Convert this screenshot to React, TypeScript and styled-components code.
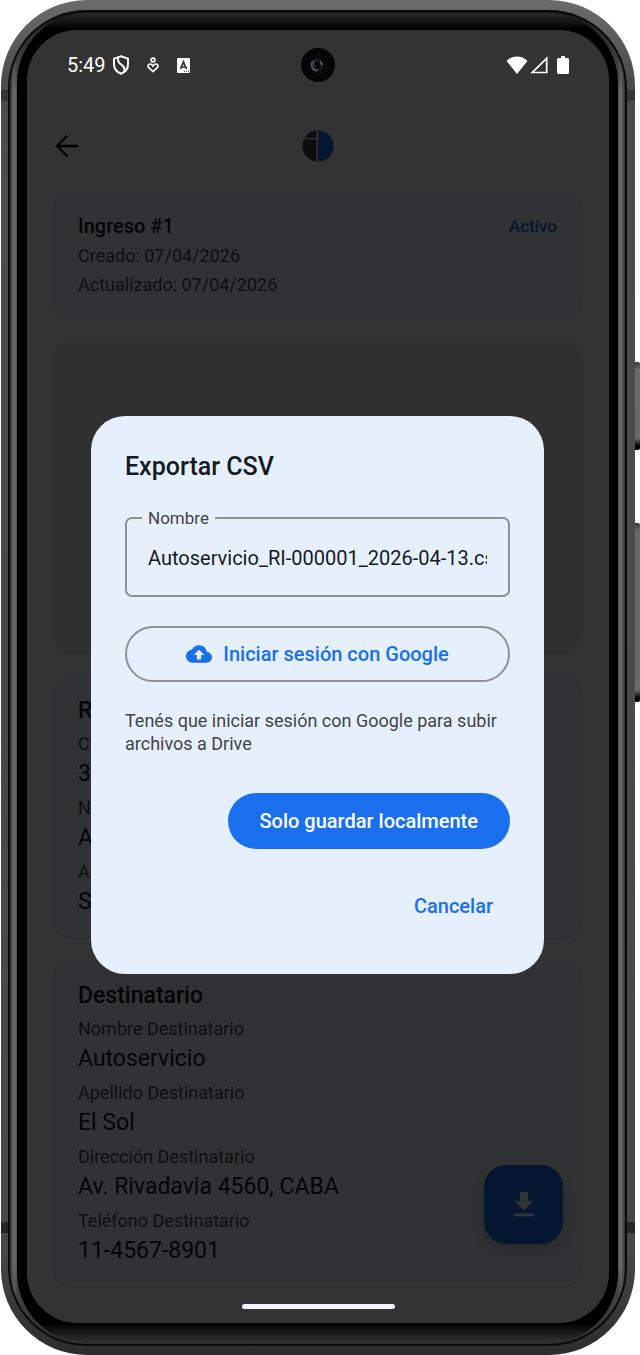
import React from "react";
import styled, { createGlobalStyle } from "styled-components";

const GlobalStyle = createGlobalStyle`
  *, *::before, *::after { box-sizing: border-box; }
  body { margin: 0; background: #fff; font-family: Roboto, sans-serif; }
  h1, h2, p, dl, dt, dd { margin: 0; }
  button { font: inherit; cursor: pointer; }
  svg { display: block; flex: none; }
`;

const Stage = styled.div`
  position: relative;
  padding: 0 5px 0 1px;
`;

const SideButton = styled.span<{ $top: number; $length: number }>`
  position: absolute;
  right: 0;
  top: ${(p) => p.$top}px;
  width: 6px;
  height: ${(p) => p.$length}px;
  border-radius: 0 2px 2px 0;
  background: linear-gradient(#3a3a3a, #6a6a6a 8px, #6a6a6a calc(100% - 12px), #000 calc(100% - 4px));
`;

const Frame = styled.div`
  position: relative;
  padding: 10px 8px 9px 7px;
  border-radius: 86px;
  background:
    linear-gradient(
      transparent 90px, #363636 90px, #363636 101px,
      transparent 101px, transparent calc(100% - 133px),
      #262626 calc(100% - 133px), #262626 calc(100% - 122px),
      transparent calc(100% - 122px)
    ),
    linear-gradient(#6c6c6c, #4c4c4c 6%, #484848 92%, #2c2c2c);
`;

const Groove = styled.div`
  padding: 2px;
  border-radius: 78px;
  background: #0a0a0a;
`;

const Rim = styled.div`
  padding: 1px 7px;
  border-radius: 76px;
  background:
    linear-gradient(#141414, #2c2c2c 20px, transparent 80px, transparent calc(100% - 80px), #333 calc(100% - 16px), #2c2c2c),
    linear-gradient(90deg, #303030, #707070 4px, #505050 7px, #505050 calc(100% - 7px), #707070 calc(100% - 4px), #303030);
`;

const Bezel = styled.div`
  padding: 17px 9px 20px 10px;
  border-radius: 70px;
  background: linear-gradient(#2b2b2b, #000 16px, #000 calc(100% - 20px), #333);
`;

const Screen = styled.div`
  position: relative;
  display: flex;
  flex-direction: column;
  overflow: hidden;
  border-radius: 50px;
  background: #333;
`;

const StatusBar = styled.div`
  display: flex;
  align-items: center;
  justify-content: space-between;
  height: 70px;
  padding: 0 40px;
  color: #fff;
`;

const StatusGroup = styled.div<{ $gap: number }>`
  display: flex;
  align-items: center;
  gap: ${(p) => p.$gap}px;
`;

const Clock = styled.time`
  margin-right: -11px;
  font-size: 20px;
  line-height: 24px;
`;

const Camera = styled.span`
  position: absolute;
  top: 18px;
  left: 50%;
  transform: translateX(-50%);
`;

const AppBar = styled.header`
  display: grid;
  grid-template-columns: 1fr auto 1fr;
  align-items: center;
  height: 91px;
  padding: 0 28px;
`;

const IconButton = styled.button`
  justify-self: start;
  padding: 0;
  border: 0;
  background: none;
  color: #000;
`;

const Content = styled.main`
  display: flex;
  flex-direction: column;
  gap: 23px;
  padding: 0 28px 0 27px;
`;

const Card = styled.section`
  padding: 20px 24px 18px;
  border-radius: 17px;
  background: #313234;
  box-shadow: 0 1px 2px rgba(0, 0, 0, 0.16);
`;

const Preview = styled.section`
  height: 312px;
  border-radius: 17px;
  background: #303030;
  box-shadow: 0 1px 2px rgba(0, 0, 0, 0.1);
`;

const CardHead = styled.div`
  display: flex;
  align-items: center;
  justify-content: space-between;
`;

const CardTitle = styled.h2<{ $large?: boolean }>`
  color: #040404;
  font-size: ${(p) => (p.$large ? 23 : 20)}px;
  font-weight: 500;
  line-height: ${(p) => (p.$large ? 32 : 30)}px;
`;

const Badge = styled.span`
  color: #051630;
  font-size: 17px;
  font-weight: 500;
`;

const Meta = styled.p`
  color: #0e0e0e;
  font-size: 18px;
  line-height: 29px;
`;

const Fields = styled.dl`
  display: grid;
  gap: 3px;
  padding-top: 3px;
`;

const FieldLabel = styled.dt`
  color: #0e0e0e;
  font-size: 18px;
  line-height: 27px;
`;

const FieldValue = styled.dd`
  color: #040404;
  font-size: 23px;
  line-height: 34px;
`;

const Fab = styled.button`
  position: absolute;
  right: 46px;
  bottom: 79px;
  display: grid;
  place-items: center;
  width: 79px;
  height: 79px;
  padding: 0;
  border: 0;
  border-radius: 22px;
  background: #051630;
  color: #333;
  box-shadow: 0 6px 14px rgba(0, 0, 0, 0.2);
`;

const NavBar = styled.div`
  display: flex;
  justify-content: center;
  height: 37px;
  padding-top: 18px;
`;

const NavHandle = styled.span`
  width: 153px;
  height: 5px;
  border-radius: 3px;
  background: #f1f4fd;
`;

const DialogLayer = styled.div`
  position: absolute;
  inset: 0;
  display: flex;
  align-items: center;
  padding: 36px 65px 0 64px;
`;

const Dialog = styled.div`
  display: flex;
  flex-direction: column;
  width: 100%;
  padding: 34px;
  border-radius: 34px;
  background: #e6f0fd;
`;

const DialogTitle = styled.h1`
  color: #171a1e;
  font-size: 25px;
  font-weight: 500;
  line-height: 34px;
`;

const Outline = styled.fieldset`
  min-width: 0;
  margin: 24px 0 29px;
  padding: 0 15px 7px;
  border: 2px solid #8e9091;
  border-radius: 7px;
`;

const Legend = styled.legend`
  padding: 0 6px;
  color: #444;
  font-size: 17px;
  line-height: 20px;
`;

const TextInput = styled.input`
  display: block;
  width: calc(100% - 12px);
  height: 60px;
  margin: 0 6px;
  padding: 0;
  border: 0;
  outline: 0;
  background: none;
  color: #171a1e;
  font-family: inherit;
  font-size: 20px;
`;

const PillButton = styled.button<{ $kind: "outlined" | "filled" | "text" }>`
  display: flex;
  align-items: center;
  justify-content: center;
  gap: 11px;
  align-self: ${(p) => (p.$kind === "outlined" ? "stretch" : "flex-end")};
  height: 56px;
  padding: 0 ${(p) => (p.$kind === "text" ? 17 : 32)}px;
  border: ${(p) => (p.$kind === "outlined" ? "2px solid #8e9091" : "0")};
  border-radius: 28px;
  background: ${(p) => (p.$kind === "filled" ? "#1a6fef" : "none")};
  color: ${(p) => (p.$kind === "filled" ? "#fff" : "#1a6fef")};
  font-size: 20px;
  font-weight: 500;
`;

const Note = styled.p`
  padding: 27px 0 38px;
  color: #444;
  font-size: 18px;
  line-height: 23px;
`;

const Actions = styled.div`
  display: flex;
  flex-direction: column;
  gap: 29px;
  padding-bottom: 6px;
`;

const ShieldIcon = () => (
  <svg width="16" height="20" viewBox="0 0 16 20" fill="none" stroke="currentColor" strokeWidth="2">
    <path d="M8 1.200 15 3.600v5.600c0 4.400-2.800 7.800-7 9.500-4.200-1.700-7-5.100-7-9.500V3.600z" />
    <path d="M5 2.600c-.3 3 .3 5 3 6.800c3 2 4 4 3.400 7" />
  </svg>
);

const HeartPersonIcon = () => (
  <svg width="12" height="16" viewBox="0 0 12 16" fill="none" stroke="currentColor" strokeWidth="1.700">
    <circle cx="6" cy="3" r="1.900" />
    <path d="M6 14.600 1.800 10.700C.3 9 1.300 7 3 7c1.500 0 2.300.8 3 2 .7-1.200 1.500-2 3-2 1.700 0 2.700 2 1.200 3.700z" />
  </svg>
);

const LetterIcon = () => (
  <svg width="13" height="15" viewBox="0 0 13 15">
    <rect width="13" height="15" rx="1" fill="currentColor" />
    <path d="M3.500 11 6.500 4l3 7M4.500 9h4" fill="none" stroke="#333" strokeWidth="1.700" />
    <path d="M7 13.300h5" stroke="#333" strokeDasharray="1 1" />
  </svg>
);

const WifiIcon = () => (
  <svg width="22" height="18" viewBox="0 0 22 18">
    <path d="M11 18 0.500 5C6-.9 16-.9 21.500 5z" fill="currentColor" />
  </svg>
);

const SignalIcon = () => (
  <svg width="25" height="18" viewBox="0 0 25 18" fill="none" stroke="currentColor" strokeWidth="1.700">
    <path d="M16.700 2.300v14.200H2.300z" />
  </svg>
);

const BatteryIcon = () => (
  <svg width="12" height="18" viewBox="0 0 12 18">
    <path d="M4 0h4v2h2.500Q12 2 12 3.500v13q0 1.500-1.500 1.500h-9Q0 18 0 16.500v-13Q0 2 1.500 2H4z" fill="currentColor" />
  </svg>
);

const CameraLens = () => (
  <svg width="34" height="34" viewBox="0 0 34 34">
    <circle cx="17" cy="17" r="17" fill="#050505" />
    <circle cx="17" cy="17" r="10" fill="#080808" stroke="#101011" />
    <circle cx="16" cy="17" r="6.500" fill="#1b1c1f" />
    <path d="M11.500 13.500a6 6 0 0 0 5 9.300" fill="none" stroke="#5a5b5e" strokeWidth="1.400" />
    <path d="M13.500 12.500a5 5 0 0 0-.5 6" fill="none" stroke="#2d4668" strokeWidth="1.600" />
    <circle cx="17" cy="17" r="3.400" fill="#08080a" />
    <path d="M19.500 13.500a5 5 0 0 1 1 4" fill="none" stroke="#77787c" strokeWidth="1.400" />
  </svg>
);

const BackIcon = () => (
  <svg width="24" height="24" viewBox="0 0 24 24" fill="none" stroke="currentColor" strokeWidth="2.400">
    <path d="M12.500 1.500 2 12l10.500 10.500M2 12h21" />
  </svg>
);

const Logo = () => (
  <svg width="32" height="32" viewBox="0 0 32 32" role="img" aria-label="Logo">
    <path d="M14.500 8V.5A15.500 15.500 0 0 0 2.600 8z" fill="#0e0d0e" />
    <path d="M14.500 9.200H2A15.500 15.500 0 0 0 14.500 31.500z" fill="#0e0d0e" />
    <path d="M16.200.5a15.500 15.500 0 0 1 0 31z" fill="#051630" />
  </svg>
);

const DownloadIcon = () => (
  <svg width="20" height="25" viewBox="0 0 20 25" fill="currentColor">
    <path d="M6 0h8v9h5.500L10 18.500.5 9H6zM0 21.500h20V24.500H0z" />
  </svg>
);

const CloudUploadIcon = () => (
  <svg width="26" height="26" viewBox="0 0 24 24" fill="currentColor">
    <path d="M19.350 10.040C18.670 6.590 15.640 4 12 4 9.110 4 6.600 5.640 5.350 8.040 2.340 8.360 0 10.910 0 14c0 3.310 2.690 6 6 6h13c2.760 0 5-2.240 5-5 0-2.640-2.050-4.780-4.650-4.960zM14 13v4h-4v-4H7l5-5 5 5h-3z" />
  </svg>
);

type Field = { label: string; value: string };

const sender: Field[] = [
  { label: "CUIT", value: "30" },
  { label: "Nombre", value: "Ana" },
  { label: "Apellido", value: "Sosa" },
];

const recipient: Field[] = [
  { label: "Nombre Destinatario", value: "Autoservicio" },
  { label: "Apellido Destinatario", value: "El Sol" },
  { label: "Dirección Destinatario", value: "Av. Rivadavia 4560, CABA" },
  { label: "Teléfono Destinatario", value: "11-4567-8901" },
];

const DetailCard = ({ title, fields }: { title: string; fields: Field[] }) => (
  <Card>
    <CardTitle $large>{title}</CardTitle>
    <Fields>
      {fields.map((f) => (
        <div key={f.label}>
          <FieldLabel>{f.label}</FieldLabel>
          <FieldValue>{f.value}</FieldValue>
        </div>
      ))}
    </Fields>
  </Card>
);

export default function App() {
  return (
    <Stage>
      <GlobalStyle />
      <SideButton $top={362} $length={88} />
      <SideButton $top={523} $length={179} />
      <Frame>
        <Groove>
          <Rim>
            <Bezel>
              <Screen>
                <StatusBar>
                  <StatusGroup $gap={18}>
                    <Clock>5:49</Clock>
                    <ShieldIcon />
                    <HeartPersonIcon />
                    <LetterIcon />
                  </StatusGroup>
                  <StatusGroup $gap={2}>
                    <WifiIcon />
                    <SignalIcon />
                    <BatteryIcon />
                  </StatusGroup>
                </StatusBar>
                <Camera>
                  <CameraLens />
                </Camera>
                <AppBar>
                  <IconButton aria-label="Volver">
                    <BackIcon />
                  </IconButton>
                  <Logo />
                </AppBar>
                <Content>
                  <Card>
                    <CardHead>
                      <CardTitle>Ingreso #1</CardTitle>
                      <Badge>Activo</Badge>
                    </CardHead>
                    <Meta>Creado: 07/04/2026</Meta>
                    <Meta>Actualizado: 07/04/2026</Meta>
                  </Card>
                  <Preview />
                  <DetailCard title="Remitente" fields={sender} />
                  <DetailCard title="Destinatario" fields={recipient} />
                </Content>
                <NavBar>
                  <NavHandle />
                </NavBar>
                <Fab aria-label="Descargar">
                  <DownloadIcon />
                </Fab>
                <DialogLayer>
                  <Dialog role="dialog" aria-modal="true" aria-labelledby="export-title">
                    <DialogTitle id="export-title">Exportar CSV</DialogTitle>
                    <Outline>
                      <Legend>
                        <label htmlFor="file-name">Nombre</label>
                      </Legend>
                      <TextInput id="file-name" defaultValue="Autoservicio_RI-000001_2026-04-13.csv" />
                    </Outline>
                    <PillButton $kind="outlined">
                      <CloudUploadIcon />
                      Iniciar sesión con Google
                    </PillButton>
                    <Note>Tenés que iniciar sesión con Google para subir archivos a Drive</Note>
                    <Actions>
                      <PillButton $kind="filled">Solo guardar localmente</PillButton>
                      <PillButton $kind="text">Cancelar</PillButton>
                    </Actions>
                  </Dialog>
                </DialogLayer>
              </Screen>
            </Bezel>
          </Rim>
        </Groove>
      </Frame>
    </Stage>
  );
}
